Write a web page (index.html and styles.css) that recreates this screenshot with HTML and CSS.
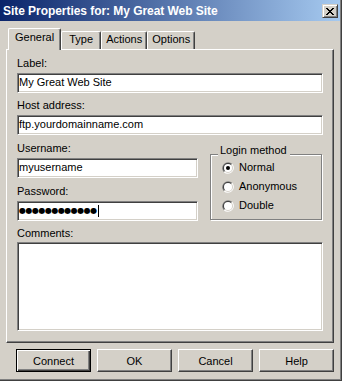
FILE: index.html
```html
<!DOCTYPE html>
<html>
<head>
<meta charset="utf-8">
<title>Site Properties</title>
<link rel="stylesheet" href="styles.css">
</head>
<body>
<div class="window">
  <div class="frame">
    <div class="titlebar">
      <span class="title">Site Properties for: My Great Web Site</span>
      <button class="close" aria-label="Close">
        <svg width="8" height="7" viewBox="0 0 8 7"><path fill="#000" d="M0 0h2v1H0zM6 0h2v1H6zM1 1h2v1H1zM5 1h2v1H5zM2 2h4v1H2zM3 3h2v1H3zM2 4h4v1H2zM1 5h2v1H1zM5 5h2v1H5zM0 6h2v1H0zM6 6h2v1H6z"/></svg>
      </button>
    </div>
    <div class="client">
      <div class="tabs">
        <div class="tab active">General</div>
        <div class="tab">Type</div>
        <div class="tab">Actions</div>
        <div class="tab">Options</div>
      </div>
      <div class="panel">
        <div class="label">Label:</div>
        <div class="field">My Great Web Site</div>
        <div class="label spaced">Host address:</div>
        <div class="field">ftp.yourdomainname.com</div>
        <div class="login-row">
          <div class="login-fields">
            <div class="label">Username:</div>
            <div class="field">myusername</div>
            <div class="label spaced7">Password:</div>
            <div class="field pw"><span class="dots">●●●●●●●●●●●●</span><span class="caret"></span></div>
          </div>
          <div class="group">
            <div class="group-title">Login method</div>
            <div class="radios">
              <div class="radio">
                <svg width="12" height="12" viewBox="0 0 12 12"><path d="M1.76 10.24A6 6 0 0 1 10.24 1.76Z" fill="#808080"/><path d="M10.24 1.76A6 6 0 0 1 1.76 10.24Z" fill="#fff"/><path d="M2.46 9.54A5 5 0 0 1 9.54 2.46Z" fill="#404040"/><path d="M9.54 2.46A5 5 0 0 1 2.46 9.54Z" fill="#d4d0c8"/><circle cx="6" cy="6" r="4" fill="#fff"/><circle cx="6" cy="6" r="2" fill="#000"/></svg>
                <span>Normal</span>
              </div>
              <div class="radio">
                <svg width="12" height="12" viewBox="0 0 12 12"><path d="M1.76 10.24A6 6 0 0 1 10.24 1.76Z" fill="#808080"/><path d="M10.24 1.76A6 6 0 0 1 1.76 10.24Z" fill="#fff"/><path d="M2.46 9.54A5 5 0 0 1 9.54 2.46Z" fill="#404040"/><path d="M9.54 2.46A5 5 0 0 1 2.46 9.54Z" fill="#d4d0c8"/><circle cx="6" cy="6" r="4" fill="#fff"/></svg>
                <span>Anonymous</span>
              </div>
              <div class="radio">
                <svg width="12" height="12" viewBox="0 0 12 12"><path d="M1.76 10.24A6 6 0 0 1 10.24 1.76Z" fill="#808080"/><path d="M10.24 1.76A6 6 0 0 1 1.76 10.24Z" fill="#fff"/><path d="M2.46 9.54A5 5 0 0 1 9.54 2.46Z" fill="#404040"/><path d="M9.54 2.46A5 5 0 0 1 2.46 9.54Z" fill="#d4d0c8"/><circle cx="6" cy="6" r="4" fill="#fff"/></svg>
                <span>Double</span>
              </div>
            </div>
          </div>
        </div>
        <div class="label comments">Comments:</div>
        <div class="field memo"></div>
      </div>
      <div class="buttons">
        <button class="btn default">Connect</button>
        <button class="btn">OK</button>
        <button class="btn">Cancel</button>
        <button class="btn">Help</button>
      </div>
    </div>
  </div>
</div>
</body>
</html>
```
FILE: styles.css
```css
body {
  margin: 0;
  background: #d4d0c8;
  font-family: "Liberation Sans", Arial, sans-serif;
  font-size: 11px;
  color: #000;
}

.window {
  width: 342px;
  height: 381px;
  box-sizing: border-box;
  border-right: 1px solid #404040;
  border-bottom: 1px solid #404040;
}

.frame {
  height: 100%;
  box-sizing: border-box;
  border-right: 1px solid #808080;
  border-bottom: 1px solid #808080;
  display: flex;
  flex-direction: column;
}

.titlebar {
  height: 21px;
  box-sizing: border-box;
  padding: 2px 2px 0 3px;
  display: flex;
  justify-content: space-between;
  align-items: flex-start;
  background: linear-gradient(to right, #0a246a, #a6caf0);
}

.title {
  color: #fff;
  font-weight: bold;
  font-size: 12px;
  line-height: 19px;
  letter-spacing: -0.05px;
  white-space: nowrap;
}

.close {
  margin-top: 2px;
  width: 16px;
  height: 14px;
  padding: 0;
  box-sizing: border-box;
  background: #d4d0c8;
  border-top: 1px solid #d4d0c8;
  border-left: 1px solid #d4d0c8;
  border-right: 1px solid #404040;
  border-bottom: 1px solid #404040;
  box-shadow: inset 1px 1px 0 #fff, inset -1px -1px 0 #808080;
  display: flex;
  align-items: center;
  justify-content: center;
}

.close svg {
  display: block;
}

.client {
  flex: 1;
  padding: 7px 6px 0 6px;
  display: flex;
  flex-direction: column;
}

.tabs {
  display: flex;
  align-items: flex-end;
  padding-left: 2px;
}

.tab {
  min-width: 40px;
  height: 18px;
  box-sizing: border-box;
  padding: 1px 4px 0;
  line-height: 13px;
  text-align: center;
  white-space: nowrap;
  border-top: 1px solid #fff;
  border-left: 1px solid #fff;
  border-right: 1px solid #404040;
  box-shadow: inset -1px 0 0 #808080;
  border-radius: 2px 2px 0 0;
  background: #d4d0c8;
}

.tab.active {
  height: 22px;
  padding: 2px 6px 0;
  margin-bottom: -1px;
  position: relative;
  z-index: 1;
}

.panel {
  height: 294px;
  box-sizing: border-box;
  padding: 7px 10px 11px;
  border-top: 1px solid #fff;
  border-left: 1px solid #fff;
  border-right: 1px solid #404040;
  border-bottom: 1px solid #404040;
  box-shadow: inset -1px -1px 0 #808080;
  display: flex;
  flex-direction: column;
}

.label {
  line-height: 13px;
  margin-bottom: 3px;
  white-space: nowrap;
}

.label.spaced {
  margin-top: 6px;
}

.label.spaced7 {
  margin-top: 7px;
}

.label.comments {
  margin-top: 6px;
  margin-bottom: 2px;
}

.field {
  height: 20px;
  box-sizing: border-box;
  background: #fff;
  border-top: 1px solid #808080;
  border-left: 1px solid #808080;
  border-right: 1px solid #fff;
  border-bottom: 1px solid #fff;
  box-shadow: inset 1px 1px 0 #404040, inset -1px -1px 0 #d4d0c8;
  padding: 0 1px;
  line-height: 16px;
  white-space: nowrap;
  overflow: hidden;
}

.field.pw {
  display: flex;
  align-items: center;
}

.dots {
  font-family: "DejaVu Sans", sans-serif;
  font-size: 8px;
  line-height: 16px;
  letter-spacing: -0.5px;
}

.caret {
  width: 1px;
  height: 12px;
  background: #000;
  margin-left: 1px;
}

.field.memo {
  flex: 1;
  height: auto;
}

.login-row {
  display: flex;
  gap: 12px;
  margin-top: 7px;
}

.login-fields {
  flex: 1;
  min-width: 0;
}

.group {
  width: 112px;
  height: 66px;
  box-sizing: border-box;
  margin-top: 12px;
  margin-right: 1px;
  border: 1px solid #808080;
  box-shadow: 1px 1px 0 #fff, inset 1px 1px 0 #fff;
  display: flex;
  flex-direction: column;
  align-items: flex-start;
}

.group-title {
  margin: -11px 0 0 7px;
  padding: 0 3px 0 2px;
  line-height: 13px;
  background: #d4d0c8;
  white-space: nowrap;
}

.radios {
  margin-top: 1px;
  padding-left: 11px;
}

.radio {
  height: 19px;
  display: flex;
  align-items: center;
  gap: 5px;
  line-height: 13px;
}

.radio svg {
  display: block;
  flex: none;
}

.buttons {
  display: flex;
  gap: 6px;
  margin-top: 6px;
  padding-left: 10px;
}

.btn {
  width: 75px;
  height: 23px;
  box-sizing: border-box;
  padding: 0;
  font-family: "Liberation Sans", Arial, sans-serif;
  font-size: 11px;
  color: #000;
  background: #d4d0c8;
  border-top: 1px solid #fff;
  border-left: 1px solid #fff;
  border-right: 1px solid #404040;
  border-bottom: 1px solid #404040;
  box-shadow: inset -1px -1px 0 #808080;
}

.btn.default {
  border: 1px solid #000;
  box-shadow: inset 1px 1px 0 #fff, inset -1px -1px 0 #404040, inset -2px -2px 0 #808080;
}
```
